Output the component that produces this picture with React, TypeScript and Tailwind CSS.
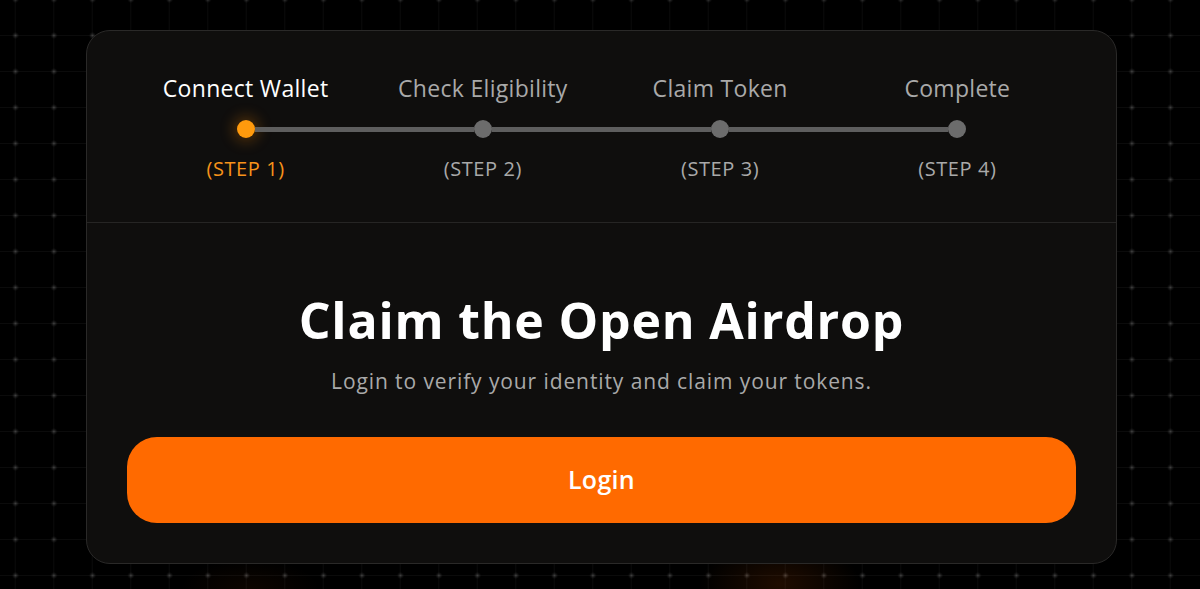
import React from "react";

const steps = [
  { label: "Connect Wallet", step: "(STEP 1)", active: true },
  { label: "Check Eligibility", step: "(STEP 2)", active: false },
  { label: "Claim Token", step: "(STEP 3)", active: false },
  { label: "Complete", step: "(STEP 4)", active: false },
];

export default function App() {
  return (
    <div
      className="relative min-h-[589px] w-full overflow-hidden bg-black pt-[30px] font-['Open_Sans',_'Noto_Sans',_sans-serif] bg-[radial-gradient(circle_at_19.5px_18.5px,rgba(255,255,255,0.2)_0px,rgba(255,255,255,0.07)_2px,transparent_3.5px),linear-gradient(to_right,transparent_19px,rgba(255,255,255,0.045)_19px,rgba(255,255,255,0.045)_20px,transparent_20px),linear-gradient(to_bottom,transparent_18px,rgba(255,255,255,0.045)_18px,rgba(255,255,255,0.045)_19px,transparent_19px)] [background-size:38.5px_36px] [background-position:-4px_17px]"
    >
      <div className="pointer-events-none absolute bottom-[-40px] left-[700px] h-[90px] w-[160px] rounded-full bg-[radial-gradient(closest-side,rgba(255,100,0,0.12),transparent)]" />
      <div className="pointer-events-none absolute bottom-[-30px] left-[180px] h-[60px] w-[140px] rounded-full bg-[radial-gradient(closest-side,rgba(255,100,0,0.05),transparent)]" />
      <div className="relative ml-[86px] w-[1031px] rounded-[24px] border border-[#2a2928] bg-[#0f0e0d]">
        <div className="grid grid-cols-4 border-b border-[#262524] px-10 pb-[41px] pt-[43px]">
          {steps.map((s, i) => (
            <div key={s.label} className="flex flex-col items-center">
              <div
                className={`whitespace-nowrap text-[23px] leading-[28px] tracking-[0.3px] ${
                  s.active ? "text-white" : "text-[#a9a9a9]"
                }`}
              >
                {s.label}
              </div>
              <div className="mt-[18px] flex h-[18px] w-full items-center">
                <div className={`h-[5px] flex-1 ${i === 0 ? "bg-transparent" : "bg-[#5e5e5e]"}`} />
                <div
                  className={`h-[18px] w-[18px] shrink-0 rounded-full ${
                    s.active
                      ? "bg-[#ff9a0d] shadow-[0_0_14px_4px_rgba(255,140,0,0.25)]"
                      : "bg-[#6c6c6c]"
                  }`}
                />
                <div className={`h-[5px] flex-1 ${i === 3 ? "bg-transparent" : "bg-[#5e5e5e]"}`} />
              </div>
              <div
                className={`mt-[19px] text-[20px] leading-[24px] tracking-[0.6px] ${
                  s.active ? "text-[#f7931a]" : "text-[#a9a9a9]"
                }`}
              >
                {s.step}
              </div>
            </div>
          ))}
        </div>
        <div className="flex flex-col items-center px-10 pb-10 pt-[68px]">
          <h1 className="text-[50px] font-bold leading-[58px] tracking-[0.8px] text-white">
            Claim the Open Airdrop
          </h1>
          <p className="mt-[18px] text-[21px] leading-[28px] tracking-[0.9px] text-[#a9a9a9]">
            Login to verify your identity and claim your tokens.
          </p>
          <button className="mt-[42px] flex h-[86px] w-full items-center justify-center rounded-[30px] bg-[#ff6a00] text-[25px] font-semibold tracking-[0.3px] text-white">
            Login
          </button>
        </div>
      </div>
    </div>
  );
}
